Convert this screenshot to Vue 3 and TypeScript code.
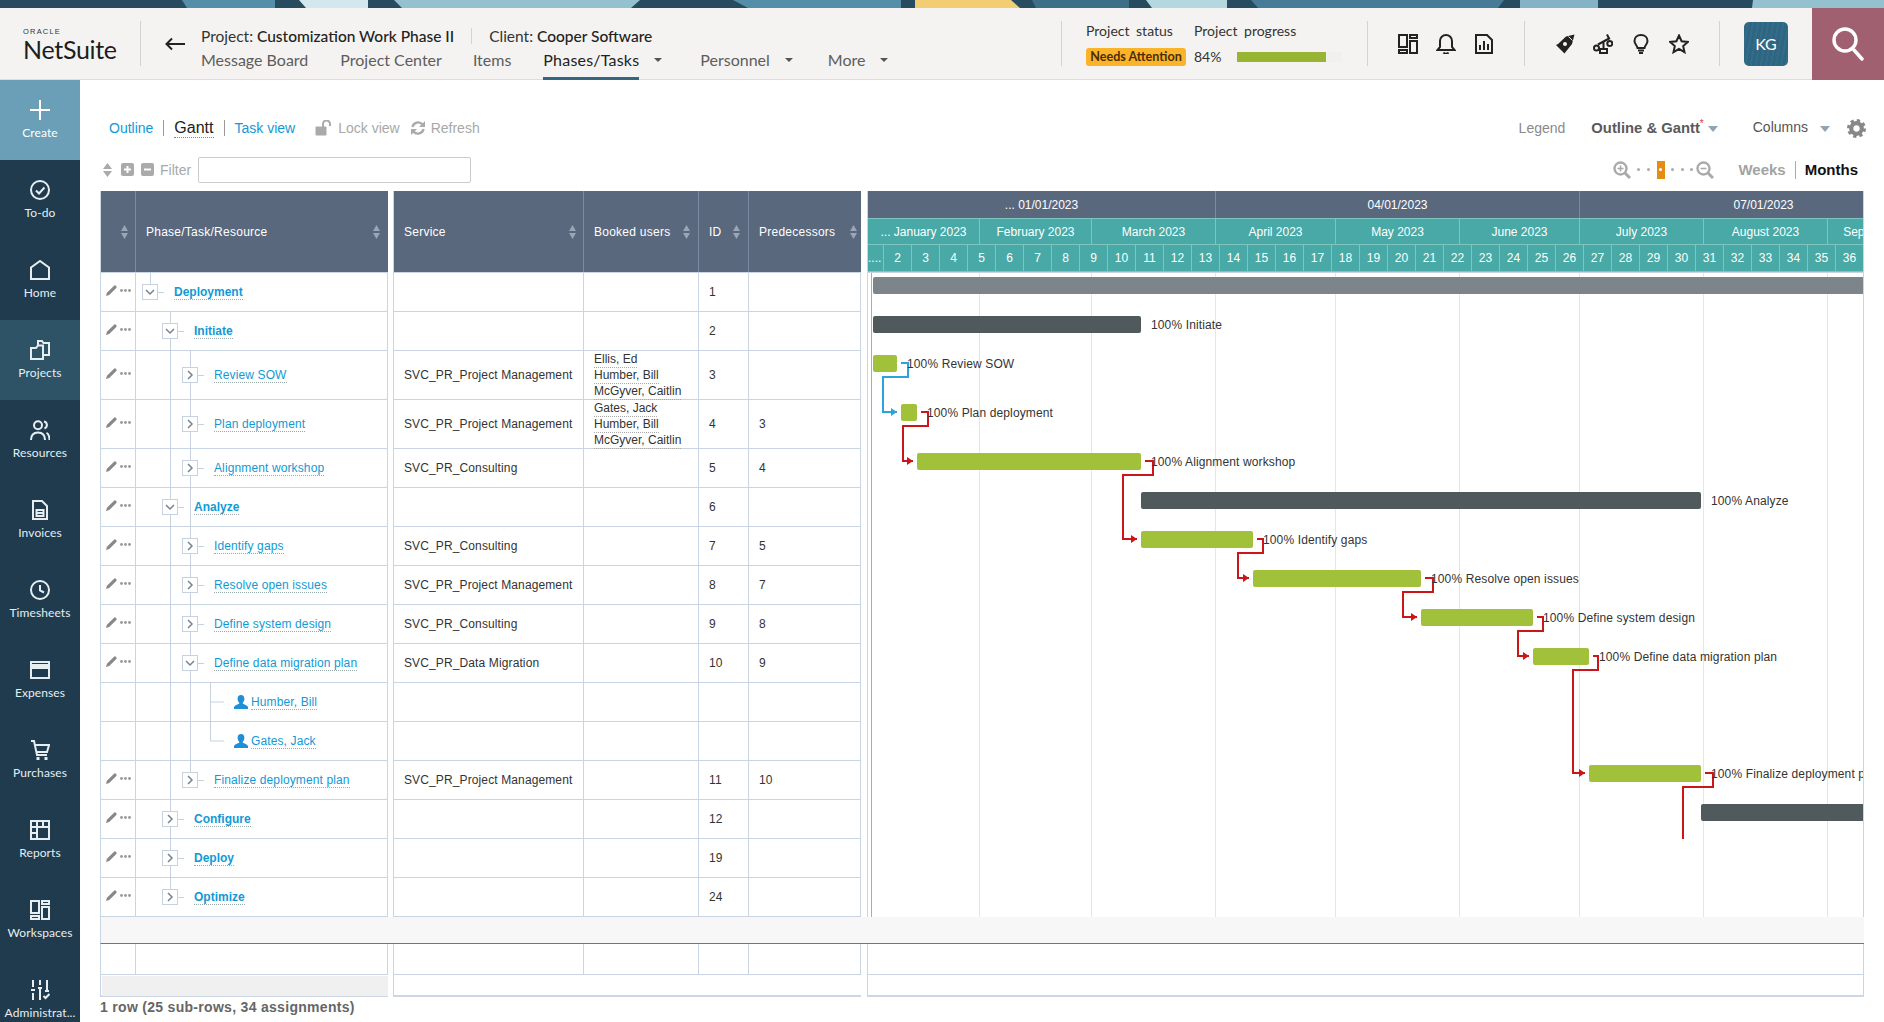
<script setup lang="ts">
interface Row {
  id?: number; name: string; level: number; kind: 'open' | 'closed' | 'res';
  bold?: boolean; service?: string; users?: string[]; pred?: number; h: number;
}
const rows: Row[] = [
  { id: 1, name: 'Deployment', level: 1, kind: 'open', bold: true, h: 39 },
  { id: 2, name: 'Initiate', level: 2, kind: 'open', bold: true, h: 39 },
  { id: 3, name: 'Review SOW', level: 3, kind: 'closed', service: 'SVC_PR_Project Management', users: ['Ellis, Ed', 'Humber, Bill', 'McGyver, Caitlin'], h: 49 },
  { id: 4, name: 'Plan deployment', level: 3, kind: 'closed', service: 'SVC_PR_Project Management', users: ['Gates, Jack', 'Humber, Bill', 'McGyver, Caitlin'], pred: 3, h: 49 },
  { id: 5, name: 'Alignment workshop', level: 3, kind: 'closed', service: 'SVC_PR_Consulting', pred: 4, h: 39 },
  { id: 6, name: 'Analyze', level: 2, kind: 'open', bold: true, h: 39 },
  { id: 7, name: 'Identify gaps', level: 3, kind: 'closed', service: 'SVC_PR_Consulting', pred: 5, h: 39 },
  { id: 8, name: 'Resolve open issues', level: 3, kind: 'closed', service: 'SVC_PR_Project Management', pred: 7, h: 39 },
  { id: 9, name: 'Define system design', level: 3, kind: 'closed', service: 'SVC_PR_Consulting', pred: 8, h: 39 },
  { id: 10, name: 'Define data migration plan', level: 3, kind: 'open', service: 'SVC_PR_Data Migration', pred: 9, h: 39 },
  { name: 'Humber, Bill', level: 4, kind: 'res', h: 39 },
  { name: 'Gates, Jack', level: 4, kind: 'res', h: 39 },
  { id: 11, name: 'Finalize deployment plan', level: 3, kind: 'closed', service: 'SVC_PR_Project Management', pred: 10, h: 39 },
  { id: 12, name: 'Configure', level: 2, kind: 'closed', bold: true, h: 39 },
  { id: 19, name: 'Deploy', level: 2, kind: 'closed', bold: true, h: 39 },
  { id: 24, name: 'Optimize', level: 2, kind: 'closed', bold: true, h: 39 },
];

interface NavItem { label: string; s: string[]; f?: string[]; active?: boolean; create?: boolean }
const nav: NavItem[] = [
  { label: 'Create', create: true, s: ['M10 0V20M0 10H20'] },
  { label: 'To-do', s: ['M10 1a9 9 0 1 0 0 18a9 9 0 1 0 0-18Z', 'M6 10.5l3 3l5.5-6'] },
  { label: 'Home', s: ['M1 19V7.5L10 1l9 6.5V19Z'] },
  { label: 'Projects', active: true, s: ['M1 19V8H6L8 5.5H13V19Z', 'M8 5V1h4l1.5 2H19V15H13'] },
  { label: 'Resources', s: ['M8 1.2a4 4 0 1 0 0 8a4 4 0 1 0 0-8Z', 'M1 20c0-5 3-7.5 7-7.5s7 2.5 7 7.5', 'M14 1.5c3.5.5 4 5.5 .5 7', 'M16.5 12.8c2 1 3 3.500 3 7.2'] },
  { label: 'Invoices', s: ['M3 1H12L17 6V19H3Z', 'M6.5 10H13.5V16H6.5ZM6.5 13H13.5'] },
  { label: 'Timesheets', s: ['M10 1a9 9 0 1 0 0 18a9 9 0 1 0 0-18Z', 'M10 5V10.5L14 12.5'] },
  { label: 'Expenses', s: ['M1 2H19V18H1Z'], f: ['M1 4H19V9H1Z'] },
  { label: 'Purchases', s: ['M1 1H4L7 15H17', 'M5 5H19L17 12H6.5'], f: ['M6.5 17h3v3h-3ZM14.5 17h3v3h-3Z'] },
  { label: 'Reports', s: ['M1 1H19V19H1Z', 'M1 7H19M7 1V19M13 1V7M1 13H7'] },
  { label: 'Workspaces', s: ['M1 1H9V13H1ZM1 16H9V19H1ZM12 1H19V4H12ZM12 7H19V19H12Z'] },
  { label: 'Administrat...', s: ['M3 0V7M1 10H5M3 13V20M10 0V5M8 8H12M10 8V20M17 0V11M15 11H19', 'M13.5 16l2 2l4-4'], f: [] },
];

const quarters = [{ t: '... 01/01/2023', w: 348 }, { t: '04/01/2023', w: 364 }, { t: '07/01/2023', w: 368 }];
const months = [
  { t: '... January 2023', w: 112 }, { t: 'February 2023', w: 112 }, { t: 'March 2023', w: 124 },
  { t: 'April 2023', w: 120 }, { t: 'May 2023', w: 124 }, { t: 'June 2023', w: 120 },
  { t: 'July 2023', w: 124 }, { t: 'August 2023', w: 124 }, { t: 'September 2023', w: 120 },
];
const weeks = Array.from({ length: 35 }, (_, i) => i + 2);
const gridX = [979, 1091, 1215, 1335, 1459, 1579, 1703, 1827];

const DARK = '#50595c', GREEN = '#a1c13b', GREY = '#7d858a';
const bars = [
  { x: 873, e: 1900, y: 277, c: GREY },
  { x: 873, e: 1141, y: 316, c: DARK, label: '100% Initiate' },
  { x: 873, e: 897, y: 355, c: GREEN, label: '100% Review SOW' },
  { x: 901, e: 917, y: 404, c: GREEN, label: '100% Plan deployment' },
  { x: 917, e: 1141, y: 453, c: GREEN, label: '100% Alignment workshop' },
  { x: 1141, e: 1701, y: 492, c: DARK, label: '100% Analyze' },
  { x: 1141, e: 1253, y: 531, c: GREEN, label: '100% Identify gaps' },
  { x: 1253, e: 1421, y: 570, c: GREEN, label: '100% Resolve open issues' },
  { x: 1421, e: 1533, y: 609, c: GREEN, label: '100% Define system design' },
  { x: 1533, e: 1589, y: 648, c: GREEN, label: '100% Define data migration plan' },
  { x: 1589, e: 1701, y: 765, c: GREEN, label: '100% Finalize deployment plan' },
  { x: 1701, e: 1900, y: 804, c: DARK },
];
const labels = bars.filter((b) => b.label);
const redLinks = [
  'M921 412H928V426H903V461H913',
  'M1145 461H1153V475H1123V539H1137',
  'M1257 539H1263V553H1238V578H1249',
  'M1425 578H1433V592H1403V617H1417',
  'M1537 617H1543V631H1518V656H1529',
  'M1593 656H1598V670H1573V773H1585',
  'M1705 773H1713V787H1683V839',
];
const redTips = [[917, 461], [1141, 539], [1253, 578], [1421, 617], [1533, 656], [1589, 773]];
function tip(x: number, y: number): string {
  return `${x - 10},${y - 4} ${x - 4},${y} ${x - 10},${y + 4}`;
}
</script>

<template>
  <div class="app">
    <svg class="banner" viewBox="0 0 1884 8" preserveAspectRatio="none" aria-hidden="true">
      <rect width="1884" height="8" fill="#274c60" />
      <polygon points="182,0 275,0 275,8 187,8" fill="#558ea8" />
      <polygon points="299,0 368,0 368,8 306,8" fill="#d2e8ee" />
      <polygon points="394,0 640,0 631,8 402,8" fill="#94c1d0" />
      <polygon points="733,0 901,0 901,8 748,8" fill="#558ea8" />
      <polygon points="915,0 1011,0 1020,8 915,8" fill="#f2cd73" />
      <polygon points="1032,0 1129,0 1129,8 1036,8" fill="#3d6f87" />
      <polygon points="1146,0 1227,0 1227,8 1152,8" fill="#b4d8e0" />
      <polygon points="1251,0 1504,0 1498,8 1258,8" fill="#487b98" />
      <polygon points="1520,0 1598,0 1598,8 1520,8" fill="#85b3c6" />
      <polygon points="1753,0 1884,0 1884,8 1752,8" fill="#94c1d0" />
    </svg>

    <header class="topbar">
      <div class="logo">
        <span class="oracle">ORACLE</span>
        <span class="netsuite">NetSuite</span>
      </div>
      <i class="vr"></i>
      <svg class="back" viewBox="0 0 20 14" aria-hidden="true"><path d="M20 7H2M7 1.5L1.5 7L7 12.5" fill="none" stroke="#222" stroke-width="2" /></svg>
      <div class="crumbs">
        <div class="title-line">
          <span>Project: <b>Customization Work Phase II</b></span>
          <i class="vr small"></i>
          <span>Client: <b>Cooper Software</b></span>
        </div>
        <nav class="tabs">
          <span class="tab">Message Board</span>
          <span class="tab t2">Project Center</span>
          <span class="tab t3">Items</span>
          <span class="tab t4 current">Phases/Tasks</span>
          <i class="caret c1"></i>
          <span class="tab t5">Personnel</span>
          <i class="caret c2"></i>
          <span class="tab t6">More</span>
          <i class="caret c2"></i>
        </nav>
      </div>
      <i class="vr"></i>
      <div class="status">
        <span class="st-label">Project status</span>
        <span class="st-label">Project progress</span>
        <span class="badge">Needs Attention</span>
        <span class="progress"><span class="pct">84%</span><span class="track"><span class="fill"></span></span></span>
      </div>
      <i class="vr"></i>
      <div class="icons">
        <svg viewBox="0 0 20 20" aria-hidden="true"><path d="M1 1H9V13H1ZM1 16H9V19H1ZM12 1H19V4H12ZM12 7H19V19H12Z" /></svg>
        <svg viewBox="0 0 20 20" aria-hidden="true"><path d="M10 1a6 6 0 0 0-6 6v6l-2.5 3h17L16 13V7a6 6 0 0 0-6-6Z" /><path d="M7.5 18.5c1 1.5 4 1.5 5 0" /></svg>
        <svg viewBox="0 0 20 20" aria-hidden="true"><path d="M2 1H13L18 6V19H2Z" /><path d="M6 16V11M10 16V7M14 16V10" /></svg>
      </div>
      <i class="vr"></i>
      <div class="icons">
        <svg viewBox="0 0 20 20" aria-hidden="true"><path class="solid" d="M19.5 .5L11 2.5L3 10L1 11L9.5 19.5L11 17.5L17 10Z" /><circle cx="10" cy="10" r="2" fill="#f4f3f1" stroke="none" /><path d="M13.5 2.5L17.5 6.5" stroke="#f4f3f1" stroke-width="1" /></svg>
        <svg viewBox="0 0 20 20" aria-hidden="true"><path d="M5 10.500L17 4M10.500 8V15M7 15H14V19H7ZM14 .5L16 4.500" /><circle cx="3.500" cy="14" r="2.500" /><circle cx="16.800" cy="9.500" r="2.500" /></svg>
        <svg viewBox="0 0 20 20" aria-hidden="true"><path d="M10 1c-4 0-6.500 2.500-6.500 6c0 3 2.500 4 3 7h7c.5-3 3-4 3-7c0-3.500-2.500-6-6.500-6Z" /><path d="M7 16.500h6M8 19h4" /></svg>
        <svg viewBox="0 0 20 20" aria-hidden="true"><path d="M10 1.500l2.600 5.700 6.200.7-4.600 4.200 1.300 6.100L10 15l-5.500 3.200 1.300-6.100L1.200 7.900l6.200-.7Z" /></svg>
      </div>
      <i class="vr"></i>
      <div class="avatar">KG</div>
      <div class="search">
        <svg viewBox="0 0 32 34" aria-hidden="true"><circle cx="13" cy="13" r="11" /><path d="M22 23L30 32" stroke-linecap="round" /></svg>
      </div>
    </header>

    <aside class="side">
      <div v-for="n in nav" :key="n.label" class="nav-item" :class="{ active: n.active, create: n.create }">
        <svg class="nav-icon" viewBox="0 0 20 20" aria-hidden="true">
          <path v-for="(d, i) in n.s" :key="i" :d="d" fill="none" stroke="currentColor" stroke-width="2" />
          <path v-for="(d, i) in n.f ?? []" :key="'f' + i" :d="d" fill="currentColor" />
        </svg>
        <span>{{ n.label }}</span>
      </div>
    </aside>

    <main class="main">
      <div class="toolbar">
        <a class="lnk">Outline</a><i class="sep"></i>
        <span class="gantt-tab">Gantt</span><i class="sep"></i>
        <a class="lnk">Task view</a>
        <svg class="lock" viewBox="0 0 18 16" aria-hidden="true"><path d="M1 7H11V15H1Z" fill="#aaa" stroke="#aaa" /><path d="M8 7V4a3.5 3.5 0 0 1 7 0V6" fill="none" stroke="#aaa" stroke-width="2" /></svg>
        <span class="muted lockt">Lock view</span>
        <svg class="refresh" viewBox="0 0 16 16" aria-hidden="true"><path d="M2.5 7a5.7 5.7 0 0 1 10-2.5M13.5 9a5.7 5.7 0 0 1-10 2.5" fill="none" stroke="#aaa" stroke-width="2.4" /><path d="M15 1V7H9ZM1 15V9H7Z" fill="#aaa" /></svg>
        <span class="muted reft">Refresh</span>
        <span class="legend">Legend</span>
        <span class="view">Outline &amp; Gantt<sup>*</sup></span>
        <i class="tri t-a"></i>
        <span class="cols">Columns</span>
        <i class="tri t-b"></i>
        <svg class="gear" viewBox="0 0 18 18" aria-hidden="true"><circle cx="9" cy="9" r="5" fill="none" stroke="#888" stroke-width="4" /><circle cx="9" cy="9" r="7.5" fill="none" stroke="#888" stroke-width="3" stroke-dasharray="3 2.9" /></svg>
      </div>

      <div class="toolbar second">
        <svg class="filt" viewBox="0 0 9 14" aria-hidden="true"><path d="M4.5 0L9 6H0ZM0 8H9L4.5 14Z" fill="#aaa" /></svg>
        <svg class="boxb bp" viewBox="0 0 13 13" aria-hidden="true"><rect width="13" height="13" rx="2" fill="#aaa" /><path d="M3 6.5H10M6.5 3V10" stroke="#fff" stroke-width="2" /></svg>
        <svg class="boxb bm" viewBox="0 0 13 13" aria-hidden="true"><rect width="13" height="13" rx="2" fill="#aaa" /><path d="M3 6.5H10" stroke="#fff" stroke-width="2" /></svg>
        <span class="muted filter-l">Filter</span>
        <div class="filter-in"></div>
        <svg class="zoom-i zp" viewBox="0 0 18 18" aria-hidden="true"><circle cx="7.5" cy="7.5" r="6" fill="none" stroke="#aaa" stroke-width="2.4" /><path d="M12 12L17 17" stroke="#aaa" stroke-width="3" /><path d="M4.5 7.5H10.5M7.5 4.5V10.5" stroke="#aaa" stroke-width="1.6" /></svg>
        <div class="slider"><i></i><i></i><b><i></i></b><i></i><i></i><i></i></div>
        <svg class="zoom-i" viewBox="0 0 18 18" aria-hidden="true"><circle cx="7.5" cy="7.5" r="6" fill="none" stroke="#aaa" stroke-width="2.4" /><path d="M12 12L17 17" stroke="#aaa" stroke-width="3" /><path d="M4.5 7.5H10.5" stroke="#aaa" stroke-width="1.6" /></svg>
        <span class="weeks">Weeks</span><i class="sep tall"></i><span class="months">Months</span>
      </div>

      <div class="panels">
        <section class="panel p-a">
          <div class="hrow">
            <div class="hc c-edit"><span></span><svg class="sorter" viewBox="0 0 7 14" aria-hidden="true"><path d="M3.5 0L7 6H0ZM0 8H7L3.5 14Z" /></svg></div>
            <div class="hc c-tree"><span>Phase/Task/Resource</span><svg class="sorter" viewBox="0 0 7 14" aria-hidden="true"><path d="M3.5 0L7 6H0ZM0 8H7L3.5 14Z" /></svg></div>
          </div>
          <div class="body">
            <svg class="tree-lines" viewBox="135 272 253 645" aria-hidden="true">
              <path d="M150.5 272V284M170.5 311V889M190.5 350V772M210.5 682V741H224M210.5 702H224" fill="none" stroke="#c6d2e0" />
            </svg>
            <div v-for="(r, i) in rows" :key="i" class="row" :class="'h' + r.h">
              <div class="c-edit cell">
                <div v-if="r.kind !== 'res'" class="acts">
                  <svg class="pencil" viewBox="0 0 12 12" aria-hidden="true"><path d="M0 12L1 8.5L8.5 1a1.4 1.4 0 0 1 2.5 2.5L3.5 11Z" fill="#888" /></svg>
                  <svg class="dots" viewBox="0 0 11 3" aria-hidden="true"><circle cx="1.5" cy="1.5" r="1.4" /><circle cx="5.5" cy="1.5" r="1.4" /><circle cx="9.5" cy="1.5" r="1.4" /></svg>
                </div>
              </div>
              <div class="c-tree cell tree" :class="'lvl' + r.level">
                <template v-if="r.kind !== 'res'">
                  <span class="box">
                    <svg viewBox="0 0 14 14" aria-hidden="true"><path :d="r.kind === 'open' ? 'M3 5L7 9L11 5' : 'M5 3L9 7L5 11'" fill="none" stroke="#77838f" stroke-width="1.5" /></svg>
                  </span>
                </template>
                <svg v-else class="person" viewBox="0 0 14 14" aria-hidden="true"><path d="M7 0c2.200 0 3.400 1.600 3.400 3.800c0 1.600-.7 3.200-1.600 3.900v1.100c1.600.6 4.200 1.400 5.200 3.200v2H0v-2c1-1.800 3.600-2.600 5.200-3.200V7.700C4.300 7 3.600 5.400 3.600 3.800C3.600 1.600 4.800 0 7 0Z" /></svg>
                <a class="task" :class="{ bold: r.bold }">{{ r.name }}</a>
              </div>
            </div>
          </div>
        </section>

        <section class="panel p-b">
          <div class="hrow">
            <div class="hc c-svc"><span>Service</span><svg class="sorter" viewBox="0 0 7 14" aria-hidden="true"><path d="M3.5 0L7 6H0ZM0 8H7L3.5 14Z" /></svg></div>
            <div class="hc c-usr"><span>Booked users</span><svg class="sorter" viewBox="0 0 7 14" aria-hidden="true"><path d="M3.5 0L7 6H0ZM0 8H7L3.5 14Z" /></svg></div>
            <div class="hc c-id"><span>ID</span><svg class="sorter" viewBox="0 0 7 14" aria-hidden="true"><path d="M3.5 0L7 6H0ZM0 8H7L3.5 14Z" /></svg></div>
            <div class="hc c-pre"><span>Predecessors</span><svg class="sorter pre" viewBox="0 0 7 14" aria-hidden="true"><path d="M3.5 0L7 6H0ZM0 8H7L3.5 14Z" /></svg></div>
          </div>
          <div class="body">
            <div v-for="(r, i) in rows" :key="i" class="row" :class="'h' + r.h">
              <div class="c-svc cell txt">{{ r.service }}</div>
              <div class="c-usr cell users"><span v-for="u in r.users" :key="u">{{ u }}</span></div>
              <div class="c-id cell txt">{{ r.id }}</div>
              <div class="c-pre cell txt">{{ r.pred }}</div>
            </div>
          </div>
        </section>

        <section class="panel p-c">
          <div class="ghead">
            <div class="gh-row q"><div v-for="q in quarters" :key="q.t" class="gh" :style="{ width: q.w + 'px' }">{{ q.t }}</div></div>
            <div class="gh-row m"><div v-for="m in months" :key="m.t" class="gh" :style="{ width: m.w + 'px' }">{{ m.t }}</div></div>
            <div class="gh-row w"><div class="gh first">....</div><div v-for="w in weeks" :key="w" class="gh wk">{{ w }}</div></div>
          </div>
          <div class="canvas">
            <svg class="chart" viewBox="868 273 996 644" aria-hidden="true">
              <path v-for="x in gridX" :key="x" :d="`M${x + 0.5} 273V917`" stroke="#e4e7ea" />
              <path d="M871.5 273V917" stroke="#e0a63a" />
              <rect v-for="b in bars" :key="b.y" :x="b.x" :y="b.y" :width="b.e - b.x" height="17" rx="2" :fill="b.c" />
              <path d="M901 363H908V377H883V412H897" fill="none" stroke="#2ba4de" stroke-width="2" />
              <polygon :points="tip(901, 412)" fill="#2ba4de" />
              <path v-for="d in redLinks" :key="d" :d="d" fill="none" stroke="#cc1517" stroke-width="2" />
              <polygon v-for="t in redTips" :key="t[1]" :points="tip(t[0], t[1])" fill="#cc1517" />
            </svg>
            <span v-for="b in labels" :key="b.y" class="bar-label" :style="{ left: b.e + 10 - 868 + 'px', top: b.y - 272 + 'px' }">{{ b.label }}</span>
          </div>
        </section>
      </div>

      <div class="band"></div>

      <div class="foot-panels">
        <div class="foot f-a"><div class="fr"><i class="c-edit"></i><i class="c-tree"></i></div><div class="fgrey"></div></div>
        <div class="foot f-b"><div class="fr"><i class="c-svc"></i><i class="c-usr"></i><i class="c-id"></i><i class="c-pre"></i></div><div class="fwhite"></div></div>
        <div class="foot f-c"><div class="fr"></div><div class="fwhite"></div></div>
      </div>

      <div class="count">1 row (25 sub-rows, 34 assignments)</div>
    </main>
  </div>
</template>

<style scoped>
.app {
  display: grid;
  grid-template-columns: 80px 1fr;
  grid-template-rows: 8px 72px 942px;
  width: 1884px;
  height: 1022px;
  overflow: hidden;
  background: #fff;
  font-family: "Liberation Sans", Arial, sans-serif;
  font-size: 12px;
  color: #333;
}
.banner { grid-column: 1 / 3; width: 100%; height: 8px; display: block; }

/* top bar */
.topbar {
  grid-column: 1 / 3;
  display: flex;
  align-items: center;
  background: #f4f3f1;
  border-bottom: 1px solid #dcdcda;
  font-family: Lato, "Noto Sans", sans-serif;
  box-sizing: border-box;
}
.vr { width: 1px; height: 45px; background: #d5d3ce; flex: none; }
.vr.small { height: 16px; margin: 0 17px; }
.logo { width: 140px; flex: none; padding: 2px 0 0 23px; box-sizing: border-box; display: flex; flex-direction: column; }
.oracle { font: 400 7.5px/8px "Liberation Sans", sans-serif; letter-spacing: 1.2px; color: #333; }
.netsuite { font: 400 25px/26px Lato, sans-serif; color: #1d1d1d; letter-spacing: -.3px; }
.back { width: 20px; height: 14px; margin-left: 24px; flex: none; }
.crumbs { width: 860px; height: 71px; margin-left: 16px; flex: none; padding-top: 16px; box-sizing: border-box; }
.title-line { display: flex; align-items: center; font-size: 15.5px; line-height: 22px; color: #333; height: 24px; }
.title-line b { font-weight: 500; color: #222; }
.tabs { display: flex; align-items: center; height: 24px; position: relative; }
.tab { font-size: 16px; color: #5d5d5d; line-height: 24px; white-space: nowrap; }
.t2 { margin-left: 32px; }
.t3 { margin-left: 31px; }
.t4 { margin-left: 32px; }
.t5 { margin-left: 38px; }
.t6 { margin-left: 35px; }
.current { color: #222; position: relative; letter-spacing: .2px; }
.current::after { content: ""; position: absolute; left: 0; right: 0; top: 29px; height: 3px; background: #36667f; }
.caret { width: 0; height: 0; border: 4px solid transparent; border-top: 4px solid #555; border-bottom: 0; margin-left: 15px; }
.status { display: grid; grid-template-columns: 108px 148px; grid-template-rows: 26px 26px; align-items: center; margin: 0 25px 0 24px; flex: none; }
.st-label { font-size: 14px; color: #333; word-spacing: 3px; white-space: nowrap; }
.badge { height: 18px; width: 100px; background: #fbb32a; border-radius: 3px; font: 700 12.6px/18px Lato, sans-serif; color: #4b2d05; text-align: center; white-space: nowrap; }
.progress { display: flex; align-items: center; }
.pct { font-size: 14px; width: 43px; color: #333; }
.track { width: 105px; height: 10px; background: #f0f0ee; }
.fill { display: block; width: 89px; height: 10px; background: #98b433; }
.icons { display: flex; gap: 18px; margin: 0 30px; flex: none; }
.icons svg { width: 20px; height: 20px; display: block; fill: none; stroke: #222; stroke-width: 2; }
.icons svg .solid { fill: #222; stroke: none; }
.avatar {
  width: 44px; height: 44px; margin-left: 24px; border-radius: 5px; flex: none;
  background: repeating-linear-gradient(100deg, #2e6580 0 3px, #336c88 3px 5px);
  color: #fff; font-size: 16px; line-height: 44px; text-align: center;
}
.search { margin-left: auto; width: 72px; height: 72px; background: #a06070; flex: none; display: flex; align-items: center; justify-content: center; position: relative; }
.search svg { width: 32px; height: 34px; fill: none; stroke: #fff; stroke-width: 3.4; }

/* sidebar */
.side { background: #1f3b4d; overflow: hidden; }
.nav-item { height: 80px; box-sizing: border-box; padding-top: 20px; display: flex; flex-direction: column; align-items: center; color: #e6eef2; font: 400 12px/16px Lato, "Noto Sans", sans-serif; letter-spacing: .1px; white-space: nowrap; }
.nav-item.create { background: #6a9fb7; color: #fff; }
.nav-item.active { background: #2e5367; }
.nav-icon { width: 20px; height: 20px; margin-bottom: 5px; flex: none; }

/* toolbars */
.main { padding: 28px 20px 0; min-width: 0; }
.toolbar { display: flex; align-items: center; height: 40px; padding-left: 9px; font-size: 14px; }
.toolbar.second { height: 43px; padding-left: 3px; }
.lnk { color: #0f9ad6; }
.sep { width: 1px; height: 16px; background: #999; margin: 0 10px 0 10px; flex: none; }
.sep.tall { height: 18px; background: #aaa; margin: 0 9px; }
.gantt-tab { font-size: 16px; color: #222; border-bottom: 1px dotted #2f9fd8; line-height: 18px; }
.muted { color: #a8a8a8; }
.lock { width: 18px; height: 16px; margin-left: 20px; flex: none; }
.lockt { margin-left: 5px; }
.refresh { width: 16px; height: 16px; margin-left: 10px; flex: none; }
.reft { margin-left: 5px; }
.legend { margin-left: auto; margin-right: 2px; color: #8a8a8a; }
.view { margin-left: 24px; font-size: 14.8px; font-weight: 700; color: #5a5a5a; white-space: nowrap; }
.view sup { color: #d33; font-weight: 400; font-size: 10px; line-height: 0; }
.tri { width: 0; height: 0; border: 5.5px solid transparent; border-top: 6px solid #94a3b0; border-bottom: 0; flex: none; }
.t-a { margin-left: 4px; margin-top: 2px; }
.cols { margin: -2px 0 0 35px; color: #555; }
.t-b { margin-left: 12px; margin-top: 2px; }
.gear { width: 19px; height: 19px; margin: 0 -2px 0 17px; flex: none; }
.filt { width: 9px; height: 14px; flex: none; }
.boxb { width: 13px; height: 13px; flex: none; }
.bp { margin-left: 9px; }
.bm { margin-left: 7px; }
.filter-l { margin-left: 6px; }
.filter-in { width: 273px; height: 26px; margin-left: 7px; border: 1px solid #ccc; border-radius: 2px; box-sizing: border-box; background: #fff; }
.zoom-i { width: 18px; height: 18px; flex: none; }
.zp { margin-left: auto; }
.slider { display: flex; align-items: center; width: 65px; justify-content: space-between; padding: 0 3px 0 6px; box-sizing: border-box; }
.slider > i { width: 3px; height: 3px; background: #aaa; border-radius: 50%; }
.slider b { width: 8px; height: 18px; background: #e58c12; display: flex; align-items: center; justify-content: center; }
.slider b i { width: 3px; height: 3px; background: #fff; border-radius: 50%; }
.weeks { margin-left: 24px; font-size: 15px; font-weight: 700; color: #a3a3a3; }
.months { font-size: 15px; font-weight: 700; color: #111; margin-right: 6px; }

/* panels */
.panels { display: flex; align-items: stretch; }
.panel { border-left: 1px solid #c9d5e3; box-sizing: border-box; flex: none; }
.p-a { width: 288px; }
.p-b { width: 468px; margin-left: 5px; }
.p-c { width: 997px; margin-left: 6px; border-right: 1px solid #c9d5e3; }
.c-edit { width: 35px; }
.c-tree { width: 252px; }
.c-svc { width: 190px; }
.c-usr { width: 115px; }
.c-id { width: 50px; }
.c-pre { width: 112px; }
.hrow { display: flex; height: 82px; background: #5a687e; border-bottom: 1px solid #c9d5e3; box-sizing: border-box; }
.hc { display: flex; align-items: center; justify-content: space-between; box-sizing: border-box; padding: 0 7px 0 10px; border-right: 1px solid #7b8aa0; color: #fff; font-size: 12px; letter-spacing: .25px; height: 81px; }
.c-usr.hc, .c-id.hc { padding-right: 8px; }
.c-pre.hc { padding-right: 3px; }
.hc:last-child { border-right-color: #5a687e; }
.sorter { width: 7px; height: 14px; fill: #9aa6b5; flex: none; }
.body { position: relative; }
.row { display: flex; box-sizing: border-box; border-bottom: 1px solid #c9d5e3; }
.h39 { height: 39px; }
.h49 { height: 49px; }
.cell { box-sizing: border-box; border-right: 1px solid #c9d5e3; display: flex; align-items: center; }
.txt { padding-left: 10px; white-space: nowrap; color: #333; letter-spacing: .12px; }
.users { padding: 1px 0 0 10px; flex-direction: column; align-items: flex-start; justify-content: center; }
.users span { line-height: 15px; height: 15px; border-bottom: 1px dotted #aaa; color: #333; white-space: nowrap; }
.acts { display: flex; align-items: center; gap: 3px; padding-left: 5px; margin-bottom: 4px; }
.pencil { width: 11px; height: 11px; }
.dots { width: 11px; height: 3px; fill: #999; }
.tree { position: relative; }
.tree-lines { position: absolute; left: -1px; top: -1px; width: 253px; height: 645px; margin-left: 35px; pointer-events: none; }
.lvl1 { padding-left: 6px; }
.lvl2 { padding-left: 26px; }
.lvl3 { padding-left: 46px; }
.lvl4 { padding-left: 98px; }
.box { width: 16px; height: 16px; border: 1px solid #c6d2e0; background: #fff; box-sizing: border-box; margin-right: 16px; position: relative; flex: none; display: block; }
.box svg { width: 14px; height: 14px; display: block; }
.box::after { content: ""; position: absolute; left: 15px; top: 7px; width: 6px; height: 1px; background: #c6d2e0; }
.person { width: 14px; height: 14px; fill: #1f8fd8; margin-right: 3px; flex: none; position: relative; }
.task { color: #0f9ad6; border-bottom: 1px dotted #9aa; line-height: 14px; white-space: nowrap; position: relative; letter-spacing: .12px; }
.task.bold { font-weight: 700; letter-spacing: 0; }

/* gantt */
.ghead { height: 82px; overflow: hidden; background: #5a687e; border-bottom: 1px solid #c9d5e3; box-sizing: border-box; }
.gh-row { display: flex; height: 27px; width: 1200px; box-sizing: border-box; }
.gh { flex: none; box-sizing: border-box; text-align: center; color: #fff; line-height: 27px; white-space: nowrap; }
.q .gh { border-right: 1px solid #7b8aa0; line-height: 29px; }
.m, .w { background: #48a9a6; }
.m { border-top: 1px solid #7cc5c1; }
.m .gh, .w .gh { border-right: 1px solid #7cc5c1; border-bottom: 1px solid #7cc5c1; }
.first { width: 16px; text-align: left; }
.wk { width: 28px; }
.canvas { position: relative; height: 644px; overflow: hidden; }
.chart { position: absolute; left: 0; top: 0; width: 996px; height: 644px; display: block; }
.bar-label { position: absolute; line-height: 17px; white-space: nowrap; color: #333; letter-spacing: .13px; }
.band { width: 1764px; height: 27px; background: #f7f7f7; border-bottom: 1px solid #3a84bd; border-left: 1px solid #c9d5e3; box-sizing: border-box; }
.foot-panels { display: flex; height: 53px; }
.foot { box-sizing: border-box; border-left: 1px solid #c9d5e3; border-bottom: 2px solid #ccd6e4; flex: none; }
.f-a { width: 288px; }
.f-b { width: 468px; margin-left: 5px; }
.f-c { width: 997px; margin-left: 6px; border-right: 1px solid #c9d5e3; }
.fr { display: flex; height: 31px; box-sizing: border-box; border-bottom: 1px solid #c9d5e3; }
.fr i { display: block; box-sizing: border-box; border-right: 1px solid #c9d5e3; flex: none; }
.fgrey { height: 20px; background: #f0f0f0; margin: 1px 0 0 1px; }
.fwhite { height: 20px; }
.count { font-size: 14px; font-weight: 700; color: #666; line-height: 16px; margin-top: 2px; letter-spacing: .3px; }
</style>
